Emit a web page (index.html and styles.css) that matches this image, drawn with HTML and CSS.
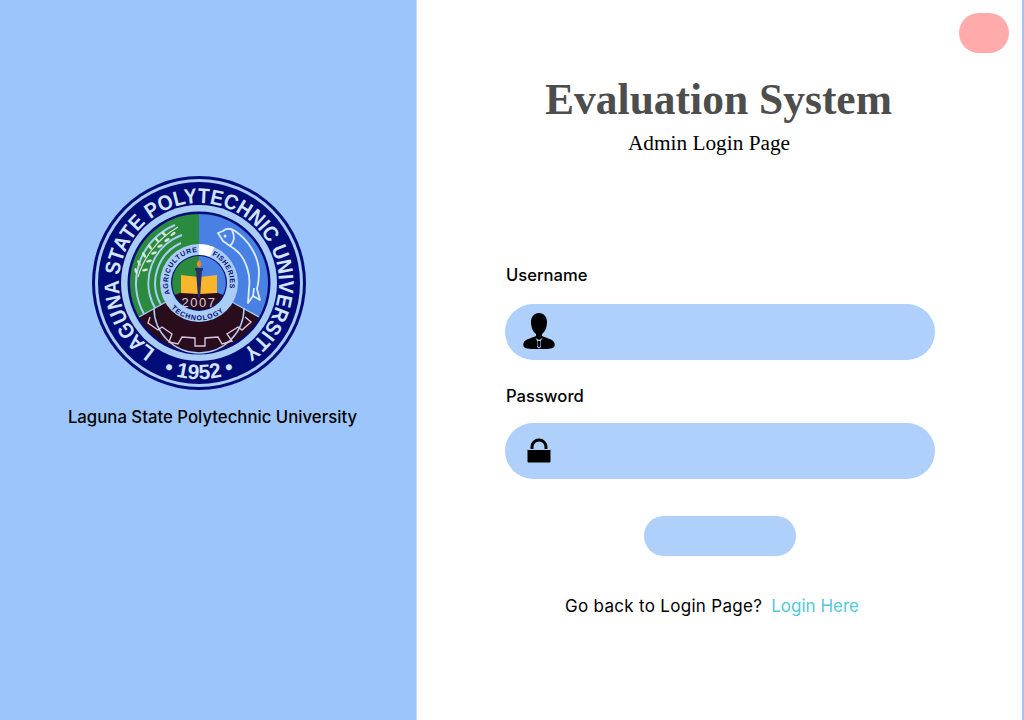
FILE: index.html
```html
<!DOCTYPE html>
<html lang="en">
<head>
    <meta charset="UTF-8">
    <title>Admin Login - Evaluation System</title>
    <link rel="stylesheet" href="styles.css">
</head>
<body>
    <aside class="side">
        <svg class="seal" viewBox="-108 -108 216 216" width="216" height="216">
            <defs>
                <path id="topArc" d="M -43.6 67.1 A 80 80 0 1 1 43.6 67.1"/>
                <path id="botArc" d="M -52 81 A 96 96 0 0 0 52 81"/>
                <path id="agriArc" d="M -29 11 A 31 31 0 0 1 -1 -31"/>
                <path id="fishArc" d="M 13 -28 A 31 31 0 0 1 30.500 5.400"/>
                <path id="techArc" d="M -28 25 A 38 38 0 0 0 28 25"/>
                <filter id="soft"><feGaussianBlur stdDeviation="0.35"/></filter>
            </defs>
            <g filter="url(#soft)">
                <circle r="107" fill="#060b78"/>
                <circle r="104" fill="#a9cdf5"/>
                <circle r="101" fill="#060b78"/>
                <circle r="78" fill="#a9cdf5"/>
                <circle r="71.500" fill="#060b78"/>
                <!-- outer sectors -->
                <path d="M 0 0 L 0 -69 A 69 69 0 0 0 -60 34 Z" fill="#2c8a3e"/>
                <path d="M 0 0 L 0 -69 A 69 69 0 0 1 60 34 Z" fill="#4a80e4"/>
                <path d="M 0 0 L 60 34 A 69 69 0 0 1 -60 34 Z" fill="#2a0a1c"/>
                <!-- arcs on the green side -->
                <g fill="none" stroke="#a9cdf5">
                    <path d="M -55 31 A 63 63 0 0 1 -24 -58" stroke-width="2"/>
                    <path d="M -44 25 A 51 51 0 0 1 -17 -48" stroke-width="2"/>
                    <path d="M -38 22 A 44 44 0 0 1 -18 -40" stroke-width="2"/>
                </g>
                <!-- wheat -->
                <path d="M -61 -6 C -56 -24 -42 -44 -21 -56" fill="none" stroke="#d6e8d8" stroke-width="1.200"/>
                <g fill="#d6e8d8">
                    <ellipse cx="-63" cy="-12" rx="3" ry="1.300" transform="rotate(70 -63 -12)"/>
                    <ellipse cx="-60" cy="-20" rx="3" ry="1.300" transform="rotate(65 -60 -20)"/>
                    <ellipse cx="-55" cy="-28" rx="3" ry="1.300" transform="rotate(60 -55 -28)"/>
                    <ellipse cx="-49" cy="-36" rx="3" ry="1.300" transform="rotate(55 -49 -36)"/>
                    <ellipse cx="-42" cy="-43" rx="3" ry="1.300" transform="rotate(50 -42 -43)"/>
                    <ellipse cx="-35" cy="-49" rx="3" ry="1.300" transform="rotate(45 -35 -49)"/>
                    <ellipse cx="-54" cy="-13" rx="3" ry="1.300" transform="rotate(-10 -54 -13)"/>
                    <ellipse cx="-50" cy="-22" rx="3" ry="1.300" transform="rotate(-15 -50 -22)"/>
                    <ellipse cx="-45" cy="-30" rx="3" ry="1.300" transform="rotate(-20 -45 -30)"/>
                    <ellipse cx="-39" cy="-37" rx="3" ry="1.300" transform="rotate(-25 -39 -37)"/>
                    <ellipse cx="-32" cy="-43" rx="3" ry="1.300" transform="rotate(-30 -32 -43)"/>
                    <ellipse cx="-26" cy="-49" rx="3" ry="1.300" transform="rotate(-35 -26 -49)"/>
                </g>
                <!-- fish -->
                <g fill="none" stroke="#dcebfb" stroke-width="1.800" stroke-linejoin="round">
                    <path d="M 19 -50 L 24 -52 C 27 -55 31 -55 36 -52 C 48 -44 60 -28 60 -10 C 60 -2 59 2 58 6 L 61 17 L 54 13 L 49 20 L 50 5 C 52 -8 47 -22 40 -30 C 37 -33 33 -36 31 -37 L 24 -42 Z"/>
                    <path d="M 33 -53 C 36 -47 35 -41 31 -37"/>
                    <path d="M 55 5 L 54 13"/>
                </g>
                <circle cx="26" cy="-47" r="1.500" fill="#dcebfb"/>
                <!-- gear outline -->
                <path d="M -45 25 A 45 45 0 0 0 45 25" fill="none" stroke="#a9cdf5" stroke-width="1.500"/>
                <path d="M -49 34 L -51 40 L -41 47 L -37 44 L -27 51 L -30 59 L -21 61 L -17 54 L -4 55 L -4 63 L 6 63 L 6 55 L 19 54 L 23 61 L 33 58 L 28 51 L 39 44 L 43 47 L 52 39 L 46 34" fill="none" stroke="#d9c6e0" stroke-width="1.400"/>
                <path d="M -60 34 L -24 14 M 60 34 L 24 14" stroke="#a9cdf5" stroke-width="1.400"/>
                <!-- inner rings -->
                <circle r="39" fill="#a9cdf5"/>
                <path d="M 0 -39 A 39 39 0 0 1 15 -36 L 11 -26.500 A 28 28 0 0 0 0 -28 Z" fill="#fff"/>
                <circle r="28" fill="#060b78"/>
                <path d="M 0 3 L 0 -27 A 27 27 0 0 0 -24 12 Z" fill="#2c8a3e"/>
                <path d="M 0 3 L 0 -27 A 27 27 0 0 1 24 12 Z" fill="#4a80e4"/>
                <path d="M 0 3 L 24 12 A 27 27 0 0 1 -24 12 Z" fill="#2a0a1c"/>
                <!-- book and torch -->
                <path d="M -18 -8 L -1 -6 L -1 11 L -18 10 Z" fill="#f9b62c"/>
                <path d="M 18 -8 L 1 -6 L 1 11 L 18 10 Z" fill="#f9b62c"/>
                <path d="M -3 -13 L 3 -13 L 1 15 L -1 15 Z" fill="#2a2f66"/>
                <rect x="-4" y="-15" width="8" height="2.500" fill="#20306e"/>
                <path d="M 0 -23 C 3 -20 3 -17 0 -15.500 C -3 -17 -3 -20 0 -23 Z" fill="#f08a24"/>
            </g>
            <g class="seal-band">
                <text><textPath href="#topArc" textLength="410" lengthAdjust="spacingAndGlyphs">LAGUNA STATE POLYTECHNIC UNIVERSITY</textPath></text>
                <text text-anchor="middle"><textPath href="#botArc" startOffset="50%">• 1952 •</textPath></text>
            </g>
            <g class="seal-small">
                <text><textPath href="#agriArc" textLength="58">AGRICULTURE</textPath></text>
                <text><textPath href="#fishArc" textLength="40">FISHERIES</textPath></text>
                <text><textPath href="#techArc" textLength="58">TECHNOLOGY</textPath></text>
            </g>
            <text class="seal-year" y="24" text-anchor="middle">2007</text>
        </svg>
        <p class="school">Laguna State Polytechnic University</p>
    </aside>

    <main class="panel">
        <div class="top-row">
            <button class="close-btn" type="button"></button>
        </div>
        <h1 class="title">Evaluation System</h1>
        <p class="subtitle">Admin Login Page</p>

        <form class="login-form" onsubmit="event.preventDefault()">
            <label class="field-label" for="username">Username</label>
            <div class="field">
                <svg class="field-icon user" viewBox="0 0 32 36" width="32" height="36">
                    <path d="M16 0 C11 0 8 4 8 9 C8 14 10 19 13 21 L13 23 C9 25 3 26 1 29 C0 31 0 33 1 34 C3 36 8 36 16 36 C24 36 29 36 31 34 C32 33 32 31 31 29 C29 26 23 25 19 23 L19 21 C22 19 24 14 24 9 C24 4 21 0 16 0 Z" fill="#000"/>
                    <path d="M12.500 25 L16 27 L19.500 25 L17.500 28.500 L18 34 L16 35.500 L14 34 L14.500 28.500 Z" fill="#aed0fb"/>
                    <path d="M15 28 L17 28 L17.400 33 L16 34.400 L14.600 33 Z" fill="#000"/>
                </svg>
                <input class="field-input" type="text" id="username">
            </div>

            <label class="field-label pass-label" for="password">Password</label>
            <div class="field">
                <svg class="field-icon lock" viewBox="0 0 24 26" width="24" height="26">
                    <path d="M3.500 12 L3.500 10 A8.500 8.500 0 0 1 20.500 10 L20.500 12 L17.500 12 L17.500 10 A5.500 5.500 0 0 0 6.500 10 L6.500 12 Z" fill="#000"/>
                    <rect x="0.500" y="12" width="23" height="13.500" rx="1" fill="#000"/>
                    <rect x="0.500" y="12" width="23" height="1" fill="#aed0fb"/>
                </svg>
                <input class="field-input" type="password" id="password">
            </div>

            <button class="submit-btn" type="submit"></button>
        </form>

        <p class="back-line">Go back to Login Page? <a class="back-link" href="#">Login Here</a></p>
    </main>
</body>
</html>
```

FILE: styles.css
```css
* {
    box-sizing: border-box;
}
body {
    margin: 0;
    height: 720px;
    display: flex;
    overflow: hidden;
    background: #9cc6fb;
    font-family: "Inter", "Liberation Sans", sans-serif;
}
.side {
    width: 417px;
    flex: none;
    display: flex;
    flex-direction: column;
    align-items: center;
    padding-top: 175px;
    border-right: 1px solid #c4dcf8;
}
.seal {
    display: block;
    margin-left: -19px;
}
.seal-band text {
    font-family: "Liberation Sans", sans-serif;
    font-size: 21px;
    font-weight: bold;
    fill: #d2e5fb;
}
.seal-small text {
    font-family: "Liberation Sans", sans-serif;
    font-size: 7px;
    font-weight: bold;
    fill: #060b78;
}
.seal-year {
    font-family: "Liberation Sans", sans-serif;
    font-size: 13px;
    letter-spacing: 1.5px;
    fill: #d8c8d8;
}
.school {
    margin: 16px 0 0 9px;
    font-size: 16.75px;
    font-weight: 500;
    color: #000;
}
.panel {
    width: 605px;
    flex: none;
    background: #fff;
    display: flex;
    flex-direction: column;
}
.top-row {
    display: flex;
    justify-content: flex-end;
    padding: 13px 13px 0 0;
}
.close-btn {
    width: 50px;
    height: 40px;
    border: none;
    border-radius: 20px;
    background: #ffabab;
}
.title {
    margin: 20px 0 0;
    padding-right: 2px;
    text-align: center;
    font-family: "Liberation Serif", serif;
    font-size: 43.5px;
    line-height: 52px;
    font-weight: bold;
    color: #4d4d4d;
}
.subtitle {
    margin: 4px 0 0;
    padding-right: 21px;
    text-align: center;
    font-family: "Liberation Serif", serif;
    font-size: 21.3px;
    line-height: 28px;
    color: #000;
}
.login-form {
    margin: 108px 0 0 88px;
    width: 430px;
    display: flex;
    flex-direction: column;
}
.field-label {
    font-size: 16.6px;
    font-weight: 500;
    line-height: 20px;
    padding-left: 1px;
    color: #000;
}
.pass-label {
    margin-top: 26px;
}
.field {
    margin-top: 19px;
    height: 56px;
    border-radius: 28px;
    background: #aed0fb;
    display: flex;
    align-items: center;
    padding-left: 18px;
    gap: 10px;
}
.field + .pass-label + .field {
    margin-top: 17px;
}
.field-icon {
    flex: none;
}
.field-icon.user {
    margin-top: -2px;
}
.field-icon.lock {
    margin: -2px 4px 0;
}
.field-input {
    flex: 1;
    min-width: 0;
    height: 100%;
    border: none;
    outline: none;
    background: transparent;
    font-size: 16px;
    border-radius: 0 28px 28px 0;
}
.submit-btn {
    align-self: center;
    margin-top: 37px;
    width: 152px;
    height: 40px;
    border: none;
    border-radius: 20px;
    background: #aed0fb;
}
.back-line {
    margin: 38px 0 0;
    padding-right: 15px;
    text-align: center;
    font-size: 17px;
    line-height: 24px;
    letter-spacing: 0.3px;
    color: #000;
}
.back-link {
    margin-left: 4px;
    color: #55c8d8;
    text-decoration: none;
    letter-spacing: 0;
}
```
